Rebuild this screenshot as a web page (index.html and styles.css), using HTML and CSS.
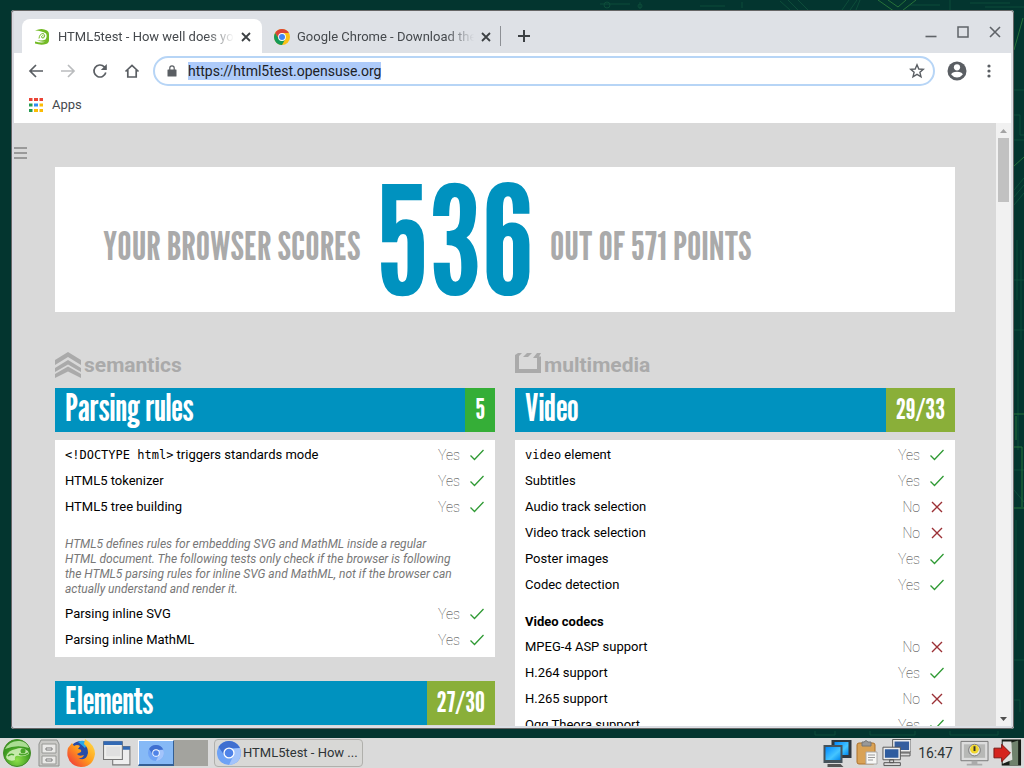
FILE: index.html
```html
<!DOCTYPE html>
<html lang="en">
<head>
<meta charset="utf-8">
<title>HTML5test - How well does your browser support HTML5?</title>
<link rel="stylesheet" href="styles.css">
</head>
<body>
<svg width="0" height="0" class="defs" aria-hidden="true">
  <defs>
    <symbol id="yes" viewBox="0 0 16 16"><path d="M1.500 8.500L5.500 12.500L14.500 3" fill="none" stroke="#2f9a34" stroke-width="1.300"/></symbol>
    <symbol id="no" viewBox="0 0 16 16"><path d="M3 3L13 13M13 3L3 13" fill="none" stroke="#9b3035" stroke-width="1.400"/></symbol>
    <symbol id="x" viewBox="0 0 10 10"><path d="M1 1L9 9M9 1L1 9" fill="none" stroke="#3c4043" stroke-width="1.800"/></symbol>
    <symbol id="chromium" viewBox="0 0 24 24">
      <circle cx="12" cy="12" r="12" fill="#6ea2f5"/>
      <path d="M1.600 6A12 12 0 0 1 22.400 6L22.800 7H12L7.500 14.500z" fill="#3f6fd0"/>
      <path d="M22.800 7A12 12 0 0 1 12 24L16.500 14.500L16 8z" fill="#a3c4fb"/>
      <circle cx="12" cy="12" r="5.600" fill="#fff"/><circle cx="12" cy="12" r="4.300" fill="#4f83e8"/>
    </symbol>
  </defs>
</svg>
<svg class="wallpaper" viewBox="0 0 1024 768" preserveAspectRatio="xMaxYMin slice" aria-hidden="true">
  <rect width="1024" height="768" fill="#03352f"/>
  <g fill="none" stroke="#0d4d3a" stroke-width="1">
    <path d="M600 4h30M640 2v7M700 6h25M742 2v6M780 1l10 9M788 0l10 10M798 0l10 10M842 10l7-10M850 10l7-10M860 0l-4 10M910 5h30M950 0v10M970 3h40M985 7h39"/>
    <circle cx="607" cy="5" r="3"/><circle cx="640" cy="6" r="2"/>
    <path d="M1014 90h10M1014 115h6v20h4M1014 140h10M1014 190l10-12M1014 197l10-12M1014 205l10-12M1017 240v60M1021 250v90M1014 280h10M1014 330h10M1018 350v100M1014 470h10M1014 490l10 12M1016 520v120M1014 660h10M1014 700h6v12"/>
    <path d="M815 731v4h20v-4M870 731v4h45v-4M950 731v4h48v-4"/>
  </g>
  <g fill="none" stroke="#27723a" stroke-width="1">
    <path d="M878 0l20 14l18-14M888 0l10 7l8-7M1014 50l9-32M1014 166l10-9M1014 414h10M1016 416v24M1014 447h8v60M1014 508h10"/>
  </g>
</svg>
<div class="desktop">
  <main class="window">
    <header class="tabstrip">
      <div class="tab active">
        <svg class="favicon" viewBox="0 0 16 16"><path d="M1 1.500Q8-1.500 13 1.500Q15 2.500 15 5V11Q15 14 12 15Q7 16.500 1 14.500V12.500Q8 14.500 11.500 12.500Q7 13.500 3 11Q8 12 11.500 10.500Q13.500 7.500 12 4.500Q8 1.800 1 1.500z" fill="#73ba25"/><path d="M5 9.500Q5.500 4.500 9.500 4.500Q12 7 9.500 9Q7.500 9.500 7.500 7.500Q8.500 6 9.500 7" fill="none" stroke="#73ba25" stroke-width="1"/></svg>
        <span class="tab-title">HTML5test - How well does your browser</span>
        <button class="tab-close" aria-label="Close tab"><svg viewBox="0 0 10 10"><use href="#x"/></svg></button>
      </div>
      <div class="tab">
        <svg class="favicon" viewBox="0 0 16 16"><circle cx="8" cy="8" r="8" fill="#fbc116"/><path d="M1.100 4A8 8 0 0 1 14.900 4H8L5 10z" fill="#db4437"/><path d="M1.100 4A8 8 0 0 0 8 16L11.200 10.300L5 10z" fill="#159a58"/><circle cx="8" cy="8" r="3.900" fill="#fff"/><circle cx="8" cy="8" r="3" fill="#4285f4"/></svg>
        <span class="tab-title">Google Chrome - Download the Fast</span>
        <button class="tab-close" aria-label="Close tab"><svg viewBox="0 0 10 10"><use href="#x"/></svg></button>
      </div>
      <span class="tab-rule"></span>
      <button class="new-tab" aria-label="New tab"><svg viewBox="0 0 14 14"><path d="M7 1V13M1 7H13" stroke="#3c4043" stroke-width="2"/></svg></button>
      <div class="win-buttons">
        <button aria-label="Minimize"><svg viewBox="0 0 12 12"><path d="M.500 10.500H11.500" stroke="#5f6368" stroke-width="1.600"/></svg></button>
        <button aria-label="Maximize"><svg viewBox="0 0 12 12"><path d="M1 1H11V11H1z" fill="none" stroke="#5f6368" stroke-width="1.500"/></svg></button>
        <button aria-label="Close"><svg viewBox="0 0 12 12"><path d="M1 1L11 11M11 1L1 11" stroke="#5f6368" stroke-width="1.600"/></svg></button>
      </div>
    </header>
    <nav class="toolbar">
      <button aria-label="Back"><svg viewBox="0 0 16 16"><path d="M15 8H2.500M8 2L2 8L8 14" fill="none" stroke="#5a5e63" stroke-width="1.700"/></svg></button>
      <button aria-label="Forward"><svg viewBox="0 0 16 16"><path d="M1 8H13.500M8 2L14 8L8 14" fill="none" stroke="#babcbe" stroke-width="1.700"/></svg></button>
      <button aria-label="Reload"><svg viewBox="0 0 16 16"><path d="M13.800 9.500A6 6 0 1 1 12.300 3.800L14 5.500" fill="none" stroke="#5a5e63" stroke-width="1.700"/><path d="M14.800 1V7H8.800z" fill="#5a5e63"/></svg></button>
      <button aria-label="Home"><svg viewBox="0 0 16 16"><path d="M1.500 8.500L8 2.300L14.500 8.500M3.800 7V14H12.200V7" fill="none" stroke="#5a5e63" stroke-width="1.700"/></svg></button>
      <div class="omnibox">
        <svg class="lock" viewBox="0 0 10 12"><path d="M1 4.500H9Q9.500 4.500 9.500 5V11Q9.500 11.500 9 11.500H1Q.500 11.500 .500 11V5Q.500 4.500 1 4.500z" fill="#5a5e63"/><path d="M2.800 5V3A2.200 2.200 0 0 1 7.200 3V5" fill="none" stroke="#5a5e63" stroke-width="1.200"/></svg>
        <div class="address" role="textbox" contenteditable="true" spellcheck="false" aria-label="Address"><span class="address-text">https://html5test.opensuse.org</span></div>
        <button class="star" aria-label="Bookmark"><svg viewBox="0 0 16 16"><path d="M8 1.800L9.800 6L14.300 6.300L10.900 9.300L12 13.800L8 11.400L4 13.800L5.100 9.300L1.700 6.300L6.200 6z" fill="none" stroke="#5a5e63" stroke-width="1.400"/></svg></button>
      </div>
      <button class="profile" aria-label="Profile"><svg viewBox="0 0 20 20"><circle cx="10" cy="10" r="9.500" fill="#5a5e63"/><circle cx="10" cy="6.300" r="3.100" fill="#fff"/><path d="M4.200 13.500Q5 10.800 10 10.800Q15 10.800 15.800 13.500Q13.500 16.500 10 16.500Q6.500 16.500 4.200 13.500z" fill="#fff"/></svg></button>
      <button class="menu" aria-label="Menu"><svg viewBox="0 0 16 16" fill="#5a5e63"><circle cx="8" cy="3" r="1.600"/><circle cx="8" cy="8" r="1.600"/><circle cx="8" cy="13" r="1.600"/></svg></button>
    </nav>
    <div class="bookmarks">
      <a href="#apps"><svg viewBox="0 0 14 14"><path d="M0 0H3.500V3H0zM5 0H9V3H5zM10.500 0H14V3H10.500z" fill="#ea4335"/><path d="M0 5.500H3.500V8.500H0zM0 11H3.500V14H0z" fill="#259b50"/><path d="M5 5.500H9V8.500H5z" fill="#2f8df5"/><path d="M5 11H9V14H5zM10.500 5.500H14V8.500H10.500zM10.500 11H14V14H10.500z" fill="#fbbc05"/></svg>Apps</a>
    </div>
    <div class="viewport">
      <div class="page">
        <button class="hamburger" aria-label="Open menu"><svg viewBox="0 0 13 12"><path d="M0 1H13M0 6H13M0 11H13" stroke="#9a9a9a" stroke-width="2"/></svg></button>
        <div class="content">
          <h1 class="score"><span>YOUR BROWSER SCORES</span><strong>536</strong><span>OUT OF 571 POINTS</span></h1>
          <div class="columns">
            <section>
              <h2><svg viewBox="0 0 26 26"><path d="M0 8L13 0L26 8V13L13 5L0 13zM0 16L13 8L26 16V20L13 12.500L0 20zM0 22L13 14.500L26 22V26L13 19.500L0 26z" fill="#aaa"/></svg>semantics</h2>
              <h3><span>Parsing rules</span><b class="full">5</b></h3>
              <table>
                <tr><th scope="row"><code>&lt;!DOCTYPE html&gt;</code> triggers standards mode</th><td>Yes<svg><use href="#yes"/></svg></td></tr>
                <tr><th scope="row">HTML5 tokenizer</th><td>Yes<svg><use href="#yes"/></svg></td></tr>
                <tr><th scope="row">HTML5 tree building</th><td>Yes<svg><use href="#yes"/></svg></td></tr>
                <tr class="note"><td colspan="2">HTML5 defines rules for embedding SVG and MathML inside a regular HTML document. The following tests only check if the browser is following the HTML5 parsing rules for inline SVG and MathML, not if the browser can actually understand and render it.</td></tr>
                <tr><th scope="row">Parsing inline SVG</th><td>Yes<svg><use href="#yes"/></svg></td></tr>
                <tr><th scope="row">Parsing inline MathML</th><td>Yes<svg><use href="#yes"/></svg></td></tr>
              </table>
              <h3><span>Elements</span><b>27/30</b></h3>
            </section>
            <section>
              <h2><svg viewBox="0 0 26 26"><path d="M0 3L3 1H7L4 4V17H22V6H18L22 1H26L24 4.500H26V21H0zM8 5L12 1H17L13 5z" fill="#aaa"/></svg>multimedia</h2>
              <h3><span>Video</span><b>29/33</b></h3>
              <table>
                <tr><th scope="row"><code>video</code> element</th><td>Yes<svg><use href="#yes"/></svg></td></tr>
                <tr><th scope="row">Subtitles</th><td>Yes<svg><use href="#yes"/></svg></td></tr>
                <tr><th scope="row">Audio track selection</th><td>No<svg><use href="#no"/></svg></td></tr>
                <tr><th scope="row">Video track selection</th><td>No<svg><use href="#no"/></svg></td></tr>
                <tr><th scope="row">Poster images</th><td>Yes<svg><use href="#yes"/></svg></td></tr>
                <tr><th scope="row">Codec detection</th><td>Yes<svg><use href="#yes"/></svg></td></tr>
                <tr class="group"><th colspan="2">Video codecs</th></tr>
                <tr><th scope="row">MPEG-4 ASP support</th><td>No<svg><use href="#no"/></svg></td></tr>
                <tr><th scope="row">H.264 support</th><td>Yes<svg><use href="#yes"/></svg></td></tr>
                <tr><th scope="row">H.265 support</th><td>No<svg><use href="#no"/></svg></td></tr>
                <tr><th scope="row">Ogg Theora support</th><td>Yes<svg><use href="#yes"/></svg></td></tr>
              </table>
            </section>
          </div>
        </div>
      </div>
      <div class="scrollbar">
        <button aria-label="Scroll up"><svg viewBox="0 0 15 15"><path d="M4 10L7.500 6L11 10z" fill="#a3a3a3"/></svg></button>
        <span class="thumb"></span>
        <button aria-label="Scroll down"><svg viewBox="0 0 15 15"><path d="M4 6L7.500 10L11 6z" fill="#505050"/></svg></button>
      </div>
    </div>
  </main>
</div>
<footer class="taskbar">
  <button aria-label="Start"><svg viewBox="0 0 30 28"><defs><radialGradient id="sg" cy="75%"><stop offset="0" stop-color="#8fe04a"/><stop offset="1" stop-color="#3c9a20"/></radialGradient></defs><circle cx="15" cy="14" r="13.500" fill="url(#sg)" stroke="#428b28"/><path d="M3 10Q8 1 18 2Q25 3 27 9Q15 5 3 10z" fill="#c5edb0" opacity=".8"/><path d="M4 18Q6 11 14 10Q20 7 26 12L27 15Q22 18 17 17Q12 16 13 21Q9 23 5 20z" fill="#dff5c9" opacity=".8"/><circle cx="21" cy="12" r="2.500" fill="#4aa52b"/><path d="M17 15Q22 17 26 14M6 17Q9 14 12 16" fill="none" stroke="#4aa52b" stroke-width="1.500"/></svg></button>
  <button class="files" aria-label="Files"><svg viewBox="0 0 22 28"><path d="M3 1H19L21 5V27H1V5z" fill="#c9c9c6" stroke="#8f918e"/><path d="M4 5H18V14H4zM4 17H18V25H4z" fill="#e9e9e7" stroke="#979895"/><path d="M8 9H14V11H8zM8 20H14V22H8z" fill="#fff" stroke="#777"/></svg></button>
  <button aria-label="Firefox"><svg viewBox="0 0 28 28"><defs><linearGradient id="fx" x1="1" y1="0" x2="0" y2="1"><stop offset="0" stop-color="#ffe44a"/><stop offset=".5" stop-color="#ff9b1c"/><stop offset="1" stop-color="#ee273f"/></linearGradient></defs><circle cx="14" cy="14" r="12" fill="#264ba8"/><path d="M11 3Q16 0 21 4L18 9Q15 6 11 3z" fill="#28a8e8"/><path d="M1 9L5 4L7 7Q10 5 13 7L11 10Q15 10 14 13L10 15Q12 18 17 16Q15 20 11 19Q19 23 21 14Q21 8 17 5L18 0Q28 6 28 15Q26 28 14 28Q3 27 .500 17Q0 12 1 9z" fill="url(#fx)"/></svg></button>
  <button aria-label="Show desktop"><svg viewBox="0 0 26 26"><g stroke="#777"><path d="M9 7H25V24H9z" fill="#eee"/><path d="M.500 2.500H18V19H.500z" fill="#eeeeec"/></g><path d="M18.500 7H25V10H18.500zM.500 2H18V5.500H.500z" fill="#3269b4"/><path d="M3 7H16V16H3z" fill="#e0e0e0"/></svg></button>
  <div class="pager"><button class="desk current" aria-label="Desktop 1"><svg viewBox="0 0 24 24"><use href="#chromium"/></svg></button><button class="desk" aria-label="Desktop 2"></button></div>
  <button class="task"><svg viewBox="0 0 24 24"><use href="#chromium"/></svg>HTML5test - How ...</button>
  <div class="tray">
    <svg viewBox="0 0 28 28"><defs><linearGradient id="scr" x2="1" y2="1"><stop offset="0" stop-color="#08f"/><stop offset=".6" stop-color="#45c5ff"/><stop offset="1" stop-color="#08e"/></linearGradient></defs><path d="M8 1H28V19H8z" fill="#303840"/><path d="M11 3H25V16H11z" fill="url(#scr)"/><path d="M0 6H19V24H0z" fill="#46535b"/><path d="M2 8H17V21H2z" fill="url(#scr)"/><path d="M4 25H17L20 28H4z" fill="#555"/></svg>
    <svg class="clip" viewBox="0 0 22 26"><rect x="1" y="3" width="18" height="21" rx="2" fill="#d9a255" stroke="#ad722c"/><path d="M6 2H8Q10-1 12 2H15V6H6z" fill="#999" stroke="#777"/><path d="M10 12H21V24H10z" fill="#f7f7f5" stroke="#aaa"/><path d="M12 15H19M12 17.500H19M12 20H17" stroke="#999"/></svg>
    <svg viewBox="0 0 30 28"><path d="M12 1H29V12H12z" fill="#365f9f" stroke="#eee" stroke-width="2"/><path d="M11 0H30V13H11zM15 14H29V17H15z" fill="none" stroke="#555"/><path d="M2 9H18V20H2z" fill="#2e5c9f" stroke="#eee" stroke-width="2"/><path d="M1 8H19V21H1zM2 24H19V27H2zM8 21H12V24H8z" fill="none" stroke="#555"/></svg>
    <time>16:47</time>
    <svg viewBox="0 0 30 28"><path d="M1 2H29V22H1z" fill="#ddd" stroke="#777"/><path d="M4 5H26V19H4z" fill="#b7b8b6"/><path d="M12 22H18V25H12zM7 25H23V27H7z" fill="#aaa"/><circle cx="15" cy="11" r="6" fill="#e8e8e8" stroke="#777"/><circle cx="15" cy="10" r="4.500" fill="#f1d72c"/><path d="M15 7V12" stroke="#333" stroke-width="2"/></svg>
    <svg viewBox="0 0 30 28"><path d="M9 0H29V27H9z" fill="#171d17"/><path d="M17 4L26 1V27H17z" fill="#70826d"/><path d="M10 2H19L20 21L10 25z" fill="#e1e1df"/><path d="M1 9H9V5L18 14L9 23V19H1z" fill="#d5241d" stroke="#781713"/></svg>
  </div>
</footer>
</body>
</html>
```
FILE: styles.css
```css
* { box-sizing: border-box; }
html, body { height: 100%; }
body {
  margin: 0;
  display: flex;
  flex-direction: column;
  overflow: hidden;
  background: #03352f;
  font: 13px/20px Roboto, "Liberation Sans", sans-serif;
  color: #000;
}
button { padding: 0; border: 0; background: none; font: inherit; color: inherit; display: flex; align-items: center; justify-content: center; }
svg { display: block; flex: none; }
.defs, .wallpaper { position: absolute; }
.wallpaper { inset: 0; width: 100%; height: 100%; z-index: -1; }

.desktop { flex: 1; min-height: 0; padding: 10px 10px 9px 11px; display: flex; }
.window {
  flex: 1;
  min-width: 0;
  display: flex;
  flex-direction: column;
  border: 3px solid #dbdee4;
  border-top: 2px solid #dee1e6;
  border-left-color: #d8d8e0;
  outline: 1px solid #666;
  outline-offset: -1px;
  border-radius: 3px;
  background: #fff;
  overflow: hidden;
}

.tabstrip { flex: none; height: 41px; display: flex; align-items: flex-end; background: #dee1e6; padding-left: 8px; }
.tab { flex: none; width: 240px; height: 34px; display: flex; align-items: center; padding: 1px 10px 0 12px; color: #45494d; }
.tab.active { background: #fff; border-radius: 8px 8px 0 0; }
.favicon { width: 16px; height: 16px; margin-right: 7px; }
.active .favicon { margin-right: 8px; }
.tab-title {
  flex: 1;
  overflow: hidden;
  white-space: nowrap;
  -webkit-mask-image: linear-gradient(to right, #000 84%, transparent);
  mask-image: linear-gradient(to right, #000 84%, transparent);
}
.tab-close { width: 12px; height: 12px; margin-left: 6px; }
.tab-close svg { width: 10px; height: 10px; }
.tab-rule { width: 1px; height: 20px; background: #8d9095; margin: 0 16px 7px -2px; }
.new-tab { height: 34px; }
.new-tab svg { width: 14px; height: 14px; }
.win-buttons { margin-left: auto; align-self: flex-start; display: flex; gap: 20px; padding: 14px 10px 0 0; }
.win-buttons svg { width: 12px; height: 12px; }

.toolbar { flex: none; height: 36px; display: flex; align-items: center; gap: 16px; padding: 0 14px 0 14px; }
.toolbar svg { width: 16px; height: 16px; }
.omnibox { flex: 1; height: 30px; margin-left: -3px; display: flex; align-items: center; border: 2px solid #b7d5f6; border-radius: 15px; padding: 0 8px 0 12px; }
.toolbar .lock { width: 10px; height: 12px; }
.address { flex: 1; margin-left: 11px; font-size: 14px; line-height: 18px; color: #202124; outline: 0; }
.address-text { background: #aecbfa; display: inline-block; }
.toolbar .profile { margin: 0 -2px 0 -4px; }
.toolbar .profile svg { width: 20px; height: 20px; }
.bookmarks { flex: none; height: 34px; display: flex; align-items: center; padding: 0 15px 3px; }
.bookmarks a { display: flex; align-items: center; gap: 9px; color: #45494d; text-decoration: none; }
.bookmarks svg { width: 14px; height: 14px; }

.viewport { flex: 1; min-height: 0; display: flex; overflow: hidden; background: #d9d9d9; }
.page { flex: 1; min-width: 0; display: flex; padding-right: 41px; }
.hamburger { flex: none; width: 41px; height: 12px; margin-top: 24px; justify-content: flex-start; }
.hamburger svg { width: 13px; height: 12px; }
.content { flex: 1; min-width: 0; padding-top: 44px; }
.score, h3 { font-family: "League Gothic", "Roboto Condensed", "Open Sans Condensed", Roboto, sans-serif; font-weight: 400; }
.score strong, h3 b { font-weight: 400; }
.score {
  margin: 0;
  height: 145px;
  padding: 0 48px;
  display: flex;
  align-items: center;
  background: #fff;
  color: #aaa;
  font-size: 40px;
  line-height: 48px;
  white-space: nowrap;
}
.score span { margin-top: 10px; }
.score strong { margin: 0 16px; font-size: 152px; line-height: 145px; color: #0092bf; }
.columns { display: grid; grid-template-columns: minmax(0, 1fr) minmax(0, 1fr); gap: 20px; margin-top: 40px; }
h2 { margin: 0 0 10px; height: 26px; display: flex; align-items: center; gap: 3px; font-size: 21px; line-height: 26px; color: #aaa; }
h2 svg { width: 26px; height: 26px; }
h3 {
  margin: 0;
  height: 44px;
  display: flex;
  justify-content: space-between;
  background: #0092bf;
  color: #fff;
  font-size: 37px;
  line-height: 40px;
}
h3 span { padding-left: 10px; }
h3 b { padding: 0 10px; background: #8aaf39; font-size: 28px; line-height: 42px; }
h3 b.full { background: #35ae37; }
table { width: 100%; margin: 8px 0 24px; border-spacing: 0; background: #fff; border-top: 2px solid #fff; border-bottom: 4px solid #fff; }
th, td { height: 26px; padding: 0; line-height: 20px; }
th { text-align: left; font-weight: 400; padding-left: 10px; }
td { display: flex; align-items: center; justify-content: flex-end; gap: 9px; padding-right: 10px; font-size: 14px; font-weight: 100; color: #333; }
td svg { width: 16px; height: 16px; }
code { font: 12px/20px "DejaVu Sans Mono", monospace; }
.note td { display: table-cell; height: auto; padding: 17px 42px 4px 10px; font: italic 12px/15px Roboto, sans-serif; color: #777; }
.group th { height: 36px; padding-top: 11px; font-weight: 700; line-height: 18px; }

.scrollbar { flex: none; width: 15px; display: flex; flex-direction: column; background: #f1f1f1; }
.scrollbar svg { width: 15px; height: 15px; }
.thumb { height: 64px; margin: 0 2px auto; background: #c1c1c1; }

.taskbar { flex: none; height: 30px; display: flex; align-items: center; background: #dadada; padding: 0 2px; color: #2e3436; }
.taskbar > button { margin-right: 6px; }
.taskbar > button svg { height: 28px; width: 30px; }
.taskbar > .files svg { width: 22px; }
.pager { display: flex; height: 26px; width: 70px; margin-right: 6px; }
.desk { flex: 1; background: #a3a39e; }
.desk.current { background: #86b9f6; border: 1px solid #fff; border-right-color: #335f95; border-bottom: 2px solid #335f95; }
.desk.current svg { width: 16px; height: 16px; }
.taskbar .task { height: 28px; width: 149px; padding: 0 2px; gap: 2px; justify-content: flex-start; border: 1px solid #b0b0ac; border-radius: 4px; background: #d8d8d6; white-space: nowrap; }
.taskbar .task svg { width: 24px; height: 24px; }
.tray { margin-left: auto; display: flex; align-items: center; gap: 4px; }
.tray svg { width: 29px; height: 28px; }
.tray .clip { width: 22px; height: 26px; }
.tray time { font-size: 14px; padding: 0 3px; }
```
